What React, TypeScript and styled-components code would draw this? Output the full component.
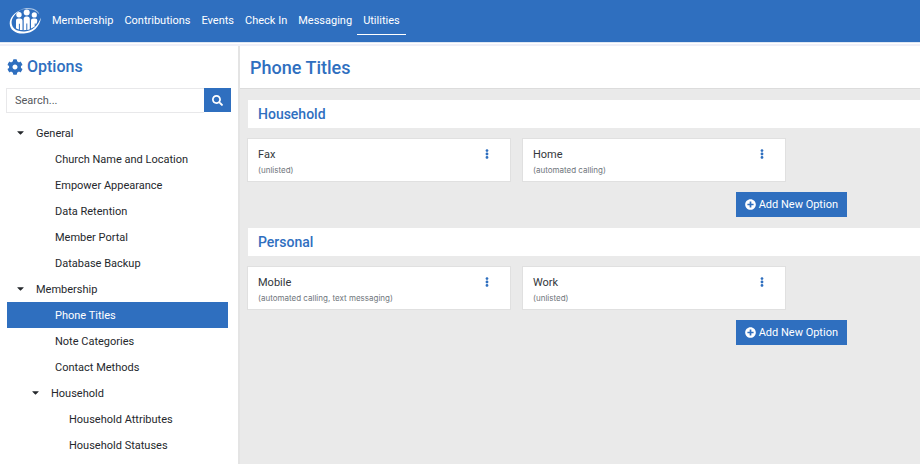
import React from "react";
import styled, { createGlobalStyle } from "styled-components";
import { FaCog, FaSearch, FaEllipsisV, FaPlusCircle, FaCaretDown } from "react-icons/fa";

const blue = "#2f6fbf";

const GlobalStyle = createGlobalStyle`
  * { box-sizing: border-box; }
  body {
    margin: 0;
    background: #ffffff;
    color: #25282c;
    font-family: Roboto, "Liberation Sans", sans-serif;
    font-size: 11px;
    line-height: 16px;
  }
  button, input { font: inherit; }
  h1, h2, h3, p, ul { margin: 0; padding: 0; font-weight: 400; }
  ul { list-style: none; }
  a { color: inherit; text-decoration: none; }
`;

const Page = styled.div`
  display: flex;
  flex-direction: column;
  height: 100vh;
  overflow: hidden;
`;

const TopBar = styled.header`
  display: flex;
  align-items: center;
  flex: none;
  height: 42px;
  padding-left: 8px;
  background: ${blue};
  color: #ffffff;
`;

const HeaderRule = styled.div`
  flex: none;
  height: 4px;
  border-top: 1px solid #dfe7f3;
  border-bottom: 2px solid #f0f0f8;
`;

const LogoLink = styled.a`
  display: flex;
  margin-right: 4px;
`;

const Nav = styled.nav`
  display: flex;
`;

const NavLink = styled.a<{ $active?: boolean }>`
  padding: 5px 6px;
  border-bottom: 1px solid ${(p) => (p.$active ? "#ffffff" : "transparent")};
  margin-right: -1px;
`;

const Body = styled.div`
  display: flex;
  flex: 1;
  min-height: 0;
`;

const Sidebar = styled.aside`
  flex: none;
  width: 240px;
  padding: 10px 7px 0 6px;
  border-right: 2px solid #e4e4e4;
`;

const SidebarTitle = styled.h2`
  display: flex;
  align-items: center;
  gap: 4px;
  height: 22px;
  padding-left: 1px;
  color: ${blue};
  font-size: 16px;
  font-weight: 500;
`;

const SearchForm = styled.form`
  display: flex;
  height: 25px;
  margin-top: 10px;
`;

const SearchInput = styled.input`
  flex: 1;
  min-width: 0;
  padding: 0 8px;
  border: 1px solid #e8e8ea;
  border-right: 0;
  border-radius: 0;
  outline: 0;
  &::placeholder { color: #54585c; opacity: 1; }
`;

const SearchButton = styled.button`
  display: flex;
  align-items: center;
  justify-content: center;
  width: 27px;
  height: 24px;
  padding: 0;
  border: 0;
  background: ${blue};
  color: #ffffff;
`;

const Tree = styled.ul`
  padding: 7px 3px 0 1px;
`;

const TreeLink = styled.a<{ $indent: number; $active?: boolean }>`
  display: flex;
  align-items: center;
  height: 26px;
  padding-top: 2px;
  padding-left: ${(p) => p.$indent}px;
  background: ${(p) => (p.$active ? blue : "transparent")};
  color: ${(p) => (p.$active ? "#ffffff" : "inherit")};
`;

const TreeToggle = styled.button<{ $indent: number }>`
  display: flex;
  align-items: center;
  gap: 10px;
  width: 100%;
  height: 26px;
  padding: 2px 0 0 ${(p) => p.$indent}px;
  border: 0;
  background: none;
  color: inherit;
  text-align: left;

  svg { margin-bottom: 4px; }
`;

const Main = styled.main`
  flex: 1;
  min-width: 0;
  background: #eaeaea;
`;

const PageTitle = styled.h1`
  height: 43px;
  padding: 10px;
  border-bottom: 1px solid #dcdcdc;
  background: #ffffff;
  color: ${blue};
  font-size: 18px;
  font-weight: 500;
  line-height: 24px;
`;

const Sections = styled.div`
  display: flex;
  flex-direction: column;
  gap: 11px;
  padding: 11px 0 0 8px;
`;

const SectionTitle = styled.h2`
  padding: 4px 10px;
  background: #ffffff;
  color: ${blue};
  font-size: 14px;
  font-weight: 500;
  line-height: 20px;
`;

const SectionBody = styled.div`
  display: flex;
  flex-direction: column;
  gap: 10px;
  max-width: 599px;
  padding-top: 10px;
`;

const Cards = styled.div`
  display: grid;
  grid-template-columns: repeat(2, minmax(0, 264px));
  gap: 11px;
  margin-left: -1px;
`;

const Card = styled.article`
  display: flex;
  justify-content: space-between;
  padding: 7px 18px 5px 10px;
  border: 1px solid #e0e0e0;
  background: #ffffff;
`;

const CardTitle = styled.h3`
  color: #33373b;
  font-size: 11px;
  line-height: 18px;
`;

const CardNote = styled.p`
  color: #70767c;
  font-family: Inter, "Liberation Sans", sans-serif;
  font-size: 8px;
  line-height: 12px;
`;

const MenuButton = styled.button`
  display: flex;
  align-items: center;
  justify-content: center;
  width: 10px;
  height: 16px;
  padding: 0;
  border: 0;
  background: none;
  color: ${blue};
`;

const AddButton = styled.button`
  display: flex;
  align-items: center;
  align-self: flex-end;
  gap: 3px;
  height: 25px;
  padding: 0 9px;
  border: 0;
  background: ${blue};
  color: #ffffff;
`;

function Logo() {
  return (
    <svg width="34" height="28" viewBox="0 0 34 28" fill="#ffffff" aria-hidden="true">
      <path d="M13 3C6.500 5.600 1.600 10.600 1.700 16.400c.2 6.500 6.200 10.600 14.200 10.100C25 26 31.800 20 33 10.500 30 18.500 24.600 23.900 16.800 24.400 9.200 24.900 4 21.600 3.600 16 3.300 11 7.500 6 13 3Z" />
      <path d="M12 2.800C18 .3 25.500.400 29.400 4.200c1 1 1.700 2.200 2 3.400-.8-1.300-1.900-2.400-3.200-3.200C24 1.800 18 1.600 12 2.800Z" opacity=".6" />
      <circle cx="11" cy="7.700" r="2.700" />
      <circle cx="18.700" cy="5.500" r="3" />
      <circle cx="26.300" cy="7.900" r="2.600" />
      <path d="M8 21.200v-7.500c0-1.300.9-2.200 2.200-2.200h2.100c1.300 0 2.200.9 2.200 2.200v9.300h-2.600v-6.200h-1v5.800C9.800 22.300 8.800 21.800 8 21.200Z" />
      <path d="M15.700 23.200V11.900c0-1.400 1-2.400 2.400-2.400h1.300c1.400 0 2.400 1 2.400 2.400v10.300c-.8.300-1.600.6-2.500.7v-6.300h-1v6.500c-.9.100-1.700.1-2.600.1Z" />
      <path d="M23 21.600v-7.900c0-1.300.9-2.200 2.200-2.200h1.900c1.300 0 2.200.9 2.200 2.100 0 1.400-.6 2.900-1.600 4.300v-1.400h-1v3.100C25.700 20.400 24.400 21.100 23 21.600Z" />
    </svg>
  );
}

const navItems = ["Membership", "Contributions", "Events", "Check In", "Messaging", "Utilities"];

type Option = { label: string; children?: Option[] };

const options: Option[] = [
  {
    label: "General",
    children: [
      { label: "Church Name and Location" },
      { label: "Empower Appearance" },
      { label: "Data Retention" },
      { label: "Member Portal" },
      { label: "Database Backup" },
    ],
  },
  {
    label: "Membership",
    children: [
      { label: "Phone Titles" },
      { label: "Note Categories" },
      { label: "Contact Methods" },
      {
        label: "Household",
        children: [{ label: "Household Attributes" }, { label: "Household Statuses" }],
      },
    ],
  },
];

const toggleIndents = [8, 23];
const leafIndents = [29, 48, 62];

function Branch({ nodes, depth = 0 }: { nodes: Option[]; depth?: number }) {
  return (
    <>
      {nodes.map((node) => (
        <li key={node.label}>
          {node.children ? (
            <>
              <TreeToggle type="button" aria-expanded="true" $indent={toggleIndents[depth]}>
                <FaCaretDown size={11} />
                {node.label}
              </TreeToggle>
              <ul>
                <Branch nodes={node.children} depth={depth + 1} />
              </ul>
            </>
          ) : (
            <TreeLink
              href="#"
              $indent={leafIndents[depth]}
              $active={node.label === "Phone Titles"}
              aria-current={node.label === "Phone Titles" ? "page" : undefined}
            >
              {node.label}
            </TreeLink>
          )}
        </li>
      ))}
    </>
  );
}

const sections = [
  {
    title: "Household",
    cards: [
      { title: "Fax", note: "(unlisted)" },
      { title: "Home", note: "(automated calling)" },
    ],
  },
  {
    title: "Personal",
    cards: [
      { title: "Mobile", note: "(automated calling, text messaging)" },
      { title: "Work", note: "(unlisted)" },
    ],
  },
];

export default function App() {
  return (
    <Page>
      <GlobalStyle />
      <TopBar>
        <LogoLink href="#" aria-label="Home">
          <Logo />
        </LogoLink>
        <Nav>
          {navItems.map((item) => (
            <NavLink key={item} href="#" $active={item === "Utilities"}>
              {item}
            </NavLink>
          ))}
        </Nav>
      </TopBar>
      <HeaderRule />
      <Body>
        <Sidebar>
          <SidebarTitle>
            <FaCog size={16} />
            Options
          </SidebarTitle>
          <SearchForm role="search">
            <SearchInput type="text" aria-label="Search options" placeholder="Search..." />
            <SearchButton type="button" aria-label="Search">
              <FaSearch size={11} />
            </SearchButton>
          </SearchForm>
          <Tree>
            <Branch nodes={options} />
          </Tree>
        </Sidebar>
        <Main>
          <PageTitle>Phone Titles</PageTitle>
          <Sections>
            {sections.map((section) => (
              <section key={section.title}>
                <SectionTitle>{section.title}</SectionTitle>
                <SectionBody>
                  <Cards>
                    {section.cards.map((card) => (
                      <Card key={card.title}>
                        <div>
                          <CardTitle>{card.title}</CardTitle>
                          <CardNote>{card.note}</CardNote>
                        </div>
                        <MenuButton type="button" aria-label={`${card.title} actions`}>
                          <FaEllipsisV size={10} />
                        </MenuButton>
                      </Card>
                    ))}
                  </Cards>
                  <AddButton type="button">
                    <FaPlusCircle size={11} />
                    Add New Option
                  </AddButton>
                </SectionBody>
              </section>
            ))}
          </Sections>
        </Main>
      </Body>
    </Page>
  );
}
